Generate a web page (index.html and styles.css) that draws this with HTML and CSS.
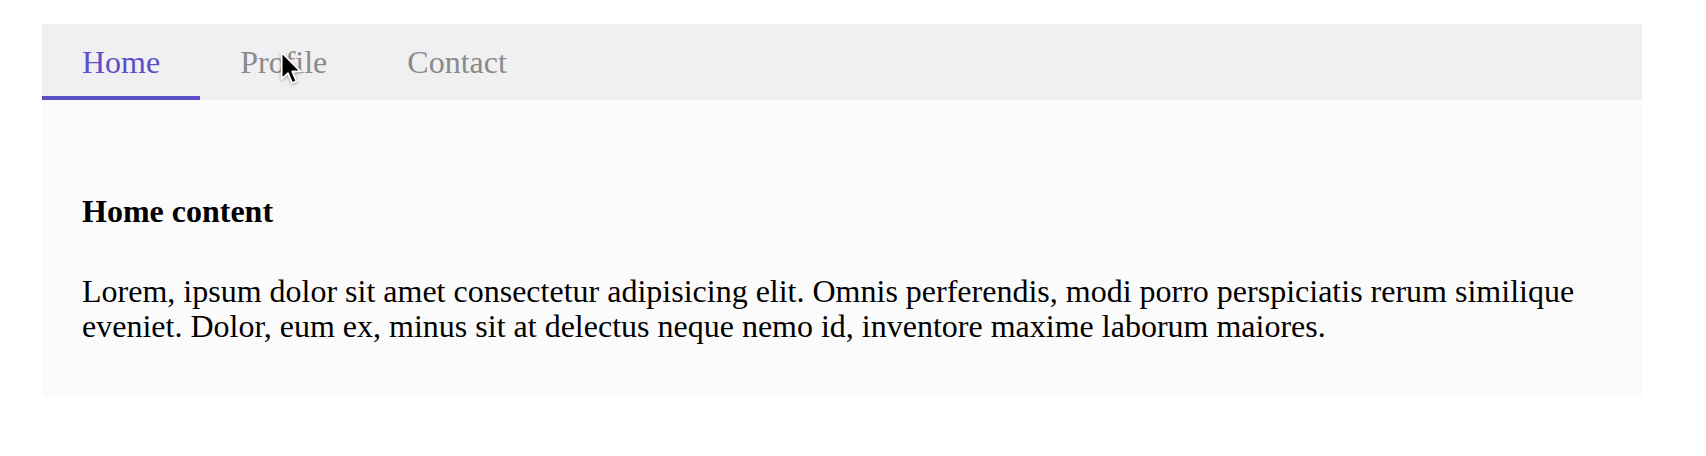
FILE: index.html
```html
<!DOCTYPE html>
<html lang="en">
<head>
<meta charset="utf-8">
<title>Tabs</title>
<link rel="stylesheet" href="styles.css">
</head>
<body>
  <div class="tabs">
    <nav class="tab-bar">
      <a class="tab active">Home</a>
      <a class="tab">Profile</a>
      <a class="tab">Contact</a>
      <svg class="cursor" width="22" height="36" viewBox="0 0 12 20" aria-hidden="true">
        <path d="M0.8 0.8 L0.8 15.6 L4.3 12.3 L6.6 17.8 L9.0 16.8 L6.7 11.4 L11.4 11.4 Z" fill="#000" stroke="#fff" stroke-width="1" stroke-linejoin="round"/>
      </svg>
    </nav>
    <section class="panel">
      <h2 class="panel-title">Home content</h2>
      <p class="panel-text">Lorem, ipsum dolor sit amet consectetur adipisicing elit. Omnis perferendis, modi porro perspiciatis rerum similique eveniet. Dolor, eum ex, minus sit at delectus neque nemo id, inventore maxime laborum maiores.</p>
    </section>
  </div>
</body>
</html>
```

FILE: styles.css
```css
html, body {
  margin: 0;
  padding: 0;
  background: #ffffff;
}

body {
  font-family: "Liberation Serif", "Times New Roman", serif;
  color: #000;
}

.tabs {
  width: 1600px;
  margin: 24px 0 0 42px;
}

.tab-bar {
  position: relative;
  display: flex;
  background: #f0f0f2;
}

.tab {
  display: block;
  font-size: 32px;
  line-height: 37px;
  padding: 20px 40px 15px;
  border-bottom: 4px solid transparent;
  color: #8a8a8a;
  cursor: pointer;
}

.tab.active {
  color: #5a4fc8;
  border-bottom-color: #5a4fc8;
}

.cursor {
  position: absolute;
  left: 238px;
  top: 27px;
  filter: drop-shadow(0 1px 1.5px rgba(0,0,0,0.35));
}

.panel {
  background: #fbfbfb;
  padding: 93px 40px 54px;
}

.panel-title {
  margin: 0 0 44px;
  font-size: 32px;
  line-height: 37px;
  font-weight: bold;
}

.panel-text {
  margin: 0;
  font-size: 32px;
  line-height: 35px;
}
```
